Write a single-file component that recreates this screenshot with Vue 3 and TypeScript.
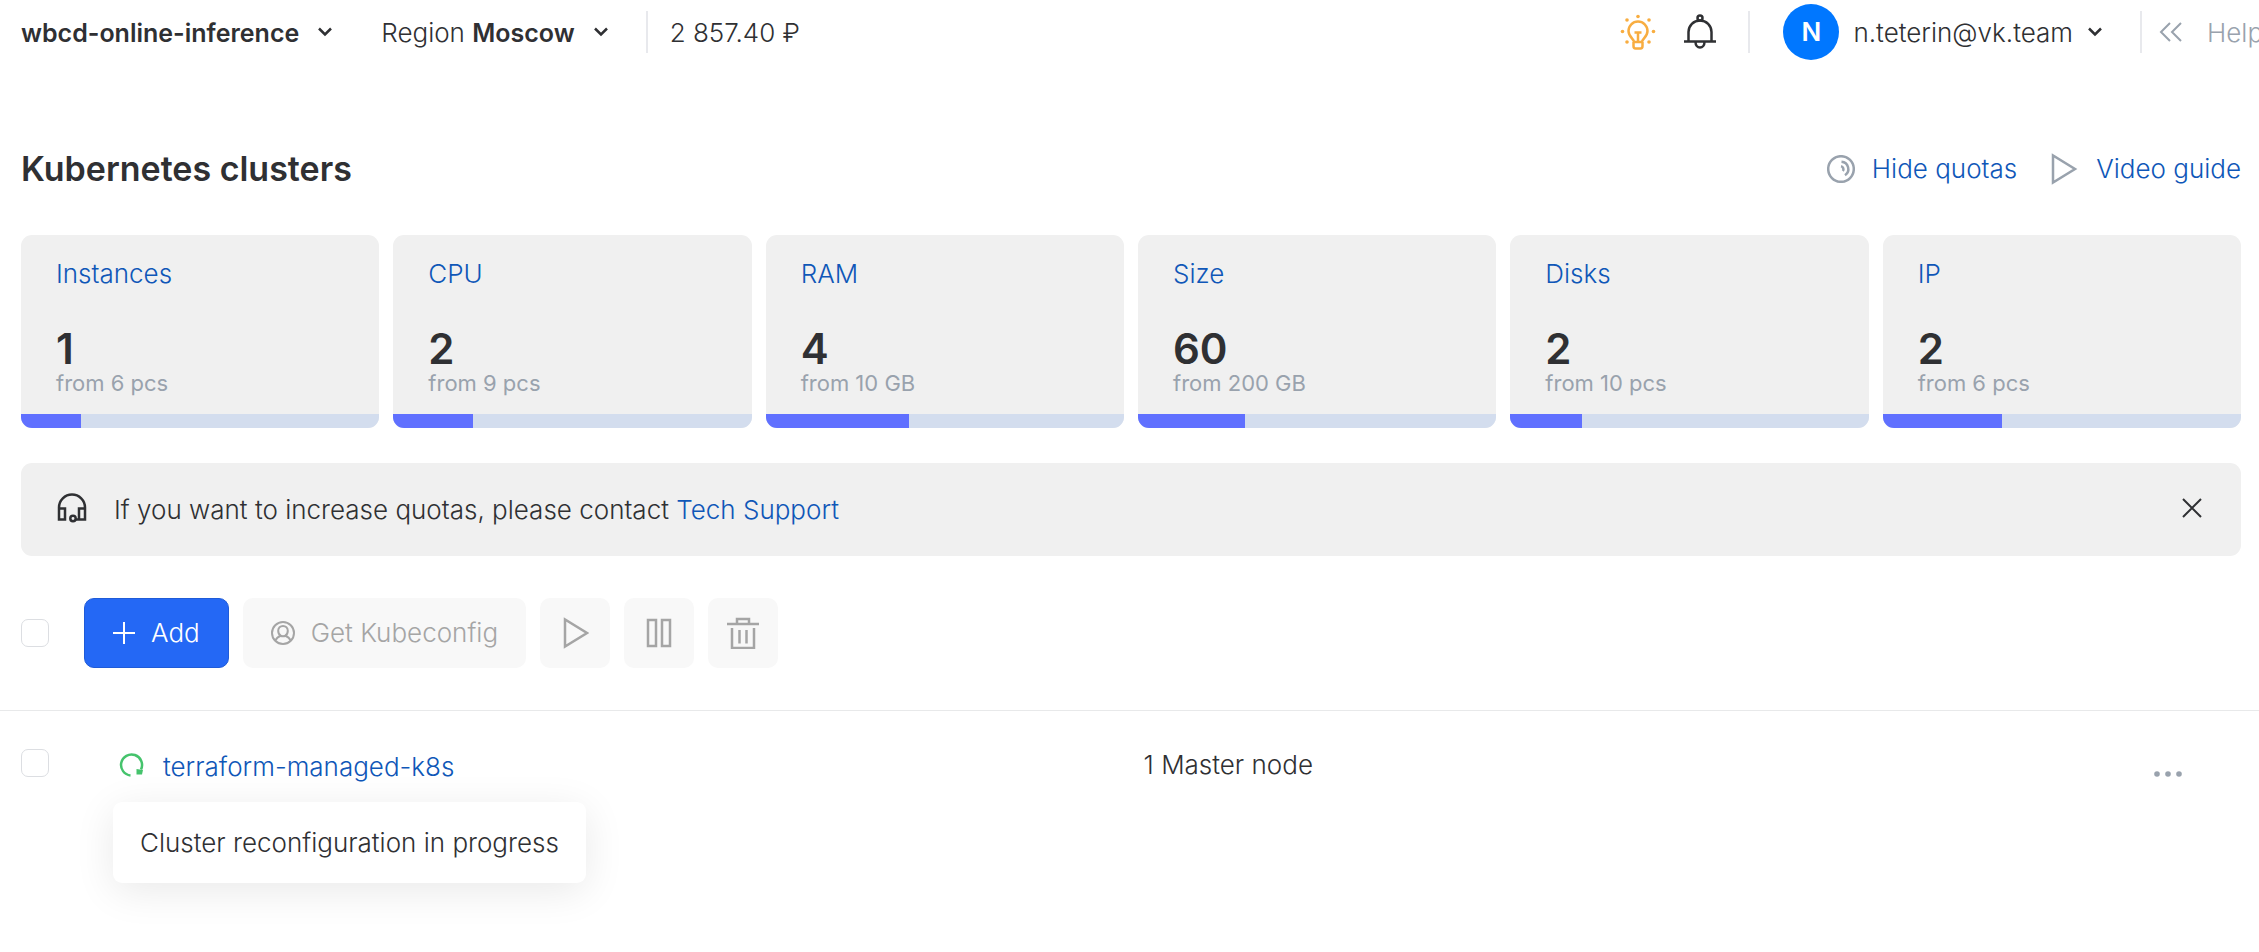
<script setup lang="ts">
import { ref } from 'vue'

interface Quota { name: string; used: number; limit: number; unit: string }

const quotas: Quota[] = [
  { name: 'Instances', used: 1, limit: 6, unit: 'pcs' },
  { name: 'CPU', used: 2, limit: 9, unit: 'pcs' },
  { name: 'RAM', used: 4, limit: 10, unit: 'GB' },
  { name: 'Size', used: 60, limit: 200, unit: 'GB' },
  { name: 'Disks', used: 2, limit: 10, unit: 'pcs' },
  { name: 'IP', used: 2, limit: 6, unit: 'pcs' },
]
const allSelected = ref(false)
const rowSelected = ref(false)
</script>

<template>
  <div class="page">
    <header class="topbar">
      <button class="picker" type="button">
        <strong class="label">wbcd-online-inference</strong>
        <svg class="chevron" viewBox="0 0 16 10"><path d="M2 1.500l6 6 6-6" /></svg>
      </button>
      <button class="picker region" type="button">
        <span class="label">Region <strong>Moscow</strong></span>
        <svg class="chevron" viewBox="0 0 16 10"><path d="M2 1.500l6 6 6-6" /></svg>
      </button>
      <span class="separator"></span>
      <span class="balance label">2 857.40 ₽</span>
      <div class="tools">
        <button class="icon-button" type="button" aria-label="Tips">
          <svg class="bulb" viewBox="0 0 36 36">
            <path d="M14 28c0-3-5.500-5-5.500-11a9.500 9.500 0 0 1 19 0c0 6-5.500 8-5.500 11zM13.500 28v4q0 2.500 2 2.500h5q2 0 2-2.500v-4M14.500 18.500h7M18 18.500V27" />
            <g class="rays"><circle cx="18" cy="2.500" r="1.800" /><circle cx="7" cy="6" r="1.800" /><circle cx="29" cy="6" r="1.800" /><circle cx="2.500" cy="17.500" r="1.800" /><circle cx="33.500" cy="17.500" r="1.800" /><circle cx="7" cy="28" r="1.800" /><circle cx="29" cy="28" r="1.800" /></g>
          </svg>
        </button>
        <button class="icon-button" type="button" aria-label="Notifications">
          <svg class="bell" viewBox="0 0 36 36"><path d="M2 27.500h32M6.500 27.500V18a11.500 11.500 0 0 1 23 0v9.500M13.500 28a4.500 5.500 0 0 0 9 0" /><circle cx="18" cy="4" r="2.500" /></svg>
        </button>
      </div>
      <span class="separator after-tools"></span>
      <button class="picker account" type="button">
        <span class="avatar">N</span>
        <span class="label">n.teterin@vk.team</span>
        <svg class="chevron" viewBox="0 0 16 10"><path d="M2 1.500l6 6 6-6" /></svg>
      </button>
      <span class="separator after-account"></span>
      <button class="picker help" type="button">
        <svg class="double-chevron" viewBox="0 0 24 20"><path d="M11 1L2 10l9 9M22 1l-9 9 9 9" /></svg>
        <span class="label">Help</span>
      </button>
    </header>

    <main>
      <div class="heading">
        <h1>Kubernetes clusters</h1>
        <a class="action" href="#quotas">
          <svg class="icon-28" viewBox="0 0 28 28"><circle cx="14" cy="14" r="12.800" /><path d="M14.500 6.800a7.300 7.300 0 0 1 3.500 13.400M14 11.300a3 3 0 0 1 1.800 4.800" /></svg>
          Hide quotas
        </a>
        <a class="action" href="#video">
          <svg class="play" viewBox="0 0 28 32"><path d="M2 2.500v27l22-13.500z" /></svg>
          Video guide
        </a>
      </div>

      <section id="quotas" class="quotas" aria-label="Quotas">
        <article v-for="quota in quotas" :key="quota.name" class="card">
          <a href="#quotas">{{ quota.name }}</a>
          <strong>{{ quota.used }}</strong>
          <small>from {{ quota.limit }} {{ quota.unit }}</small>
          <div class="meter"><div class="meter-fill" :style="{ width: (quota.used / quota.limit) * 100 + '%' }"></div></div>
        </article>
      </section>

      <aside class="notice">
        <svg class="headset" viewBox="0 0 30 30"><path d="M2 16v-1.500a13 13 0 0 1 26 0V16M2 15.500h6v11H2zM22 15.500h6v11h-6zM28 26.500h-9.500" /><circle cx="16" cy="25.500" r="2.700" /></svg>
        <p>If you want to increase quotas, please contact <a href="#support">Tech Support</a></p>
        <button class="icon-button close" type="button" aria-label="Close">
          <svg viewBox="0 0 20 20"><path d="M1 1l18 18M19 1L1 19" /></svg>
        </button>
      </aside>

      <div class="toolbar">
        <input v-model="allSelected" type="checkbox" aria-label="Select all clusters" />
        <div class="buttons">
          <button class="button primary" type="button">
            <svg class="plus" viewBox="0 0 22 22"><path d="M11 0v22M0 11h22" /></svg>
            Add
          </button>
          <button class="button" type="button" disabled>
            <svg class="user" viewBox="0 0 24 24"><circle cx="12" cy="12" r="11" /><path d="M4.500 19.500c1-3 3-4 5.200-4.800-1.800-1.200-2.500-3-2.500-5a4.800 4.800 0 0 1 9.600 0c0 2-.7 3.800-2.500 5 2.200.8 4.200 1.800 5.200 4.800M9.500 14.700q2.500 1 5 0" /></svg>
            Get Kubeconfig
          </button>
          <button class="button square" type="button" disabled aria-label="Start">
            <svg class="play" viewBox="0 0 28 32"><path d="M4 2.500v27l22-13.500z" /></svg>
          </button>
          <button class="button square" type="button" disabled aria-label="Stop">
            <svg class="glyph" viewBox="0 0 32 32"><path d="M5 3h8v26H5zM19 3h8v26h-8z" /></svg>
          </button>
          <button class="button square" type="button" disabled aria-label="Delete">
            <svg class="glyph" viewBox="0 0 32 32"><path d="M0 7h32M10 7V2h12v5M5 11v20h22V11M12.500 13v13.500M19.500 13v13.500" /></svg>
          </button>
        </div>
      </div>
    </main>

    <section class="row">
      <input v-model="rowSelected" type="checkbox" aria-label="Select terraform-managed-k8s" />
      <div class="name">
        <svg class="status" viewBox="0 0 26 26"><path d="M11.500 22.400A10.500 10.500 0 1 1 22 16.500" /><path class="fill" d="M17.500 16v5.500h5.500l1-4.500z" /></svg>
        <a class="label" href="#cluster">terraform-managed-k8s</a>
        <div class="tooltip" role="tooltip">Cluster reconfiguration in progress</div>
      </div>
      <span class="nodes">1 Master node</span>
      <button class="icon-button more" type="button" aria-label="More">
        <svg viewBox="0 0 28 6"><circle cx="3" cy="3" r="2.800" /><circle cx="14" cy="3" r="2.800" /><circle cx="25" cy="3" r="2.800" /></svg>
      </button>
    </section>
  </div>
</template>

<style>
body { background: #fff; }
</style>

<style scoped>
.page { overflow-x: clip; color: #2f3033; font: 300 26px/32px Inter, "Noto Sans", sans-serif; }
button { font: inherit; color: inherit; border: 0; background: none; padding: 0; }
svg { display: block; flex: none; fill: none; stroke: currentColor; stroke-width: 2.500; }
a { color: #0f57b8; text-decoration: none; }
strong { font-weight: 600; }
.topbar { display: flex; align-items: center; height: 64px; padding-left: 21px; white-space: nowrap; }
.topbar strong { font-size: 25px; }
.label { padding-top: 2px; }
.picker { display: flex; align-items: center; gap: 18px; }
.chevron { width: 16px; height: 10px; }
.region { margin-left: 48px; }
.separator { width: 2px; height: 42px; background: #e8e9ed; margin-left: 37px; }
.balance { margin-left: 22px; }
.tools { display: flex; gap: 26px; margin-left: auto; }
.icon-button { display: block; }
.bulb, .bell { width: 36px; height: 36px; }
.bulb { color: #f8ad40; }
.rays { fill: currentColor; stroke: none; }
.after-tools { margin-left: 30px; }
.account { margin-left: 33px; gap: 14px; }
.avatar { width: 56px; height: 56px; border-radius: 50%; background: #0077ff; color: #fff; font-weight: 600; line-height: 56px; }
.after-account { margin-left: 37px; }
.help { width: 100px; margin-left: 17px; gap: 24px; color: #99a2ad; }
.double-chevron { width: 24px; height: 20px; stroke-width: 2; }
main { padding: 0 18px 0 21px; }
.heading { display: flex; align-items: center; gap: 34px; margin-top: 81px; height: 48px; }
h1 { margin: 0 auto 0 0; font-size: 34px; line-height: 48px; font-weight: 600; }
.action { display: flex; align-items: center; gap: 17px; }
.action svg { color: #99a2ad; }
.icon-28 { width: 28px; height: 28px; }
.play { width: 28px; height: 32px; }
.fill { fill: currentColor; stroke: none; }
.quotas { display: grid; grid-template-columns: repeat(6, 1fr); gap: 14px; margin-top: 42px; }
.card { display: flex; flex-direction: column; align-items: flex-start; padding: 23px 0 0 35px; background: #f0f0f0; border-radius: 11px; overflow: hidden; }
.card strong { margin-top: 34px; font-size: 42px; line-height: 50px; }
.card small { font-size: 22px; line-height: 28px; margin-top: -5px; font-weight: 400; color: #99a2ad; }
.meter { align-self: stretch; height: 14px; margin: 17px 0 0 -35px; background: #d3ddee; }
.meter-fill { height: 100%; background: #6070ff; }
.notice { display: flex; align-items: center; gap: 27px; min-height: 89px; margin-top: 35px; padding: 0 39px 4px 36px; background: #f0f0f0; border-radius: 11px; }
.notice p { margin: 0 auto 0 0; padding-top: 4px; }
.headset { width: 30px; height: 30px; }
.close svg { width: 20px; height: 20px; stroke-width: 2; }
.toolbar { display: flex; align-items: center; gap: 35px; margin-top: 42px; padding-bottom: 42px; }
input { appearance: none; flex: none; width: 28px; height: 28px; margin: 0; border: 1px solid #dcdee2; border-radius: 7px; background: #fff; }
.buttons { display: flex; gap: 14px; }
.button { display: flex; align-items: center; justify-content: center; gap: 16px; height: 70px; padding: 0 28px; border-radius: 10px; background: #f8f8f8; color: #a5a5a5; }
.primary { background: #2468f5; border: 1px solid #1f5bd8; color: #fff; }
.plus { width: 22px; height: 22px; stroke-width: 2; }
.user { width: 24px; height: 24px; stroke-width: 2; }
.square { width: 70px; padding: 0; }
.glyph { width: 32px; height: 32px; }
.row { display: grid; grid-template-columns: 28px 13fr 12fr 105px; align-items: start; padding: 38px 0 170px 21px; border-top: 1px solid #e8e9ea; }
.name { position: relative; display: flex; align-items: center; gap: 18px; padding-left: 70px; }
.status { width: 26px; height: 26px; color: #45c36c; }
.tooltip { position: absolute; top: 53px; left: 64px; padding: 25px 27px 24px; border-radius: 9px; background: #fff; box-shadow: 0 8px 40px rgba(0, 0, 0, 0.09); white-space: nowrap; }
.more { color: #99a2ad; padding: 22px 0; }
.more svg { width: 28px; height: 6px; fill: currentColor; stroke: none; }
</style>
